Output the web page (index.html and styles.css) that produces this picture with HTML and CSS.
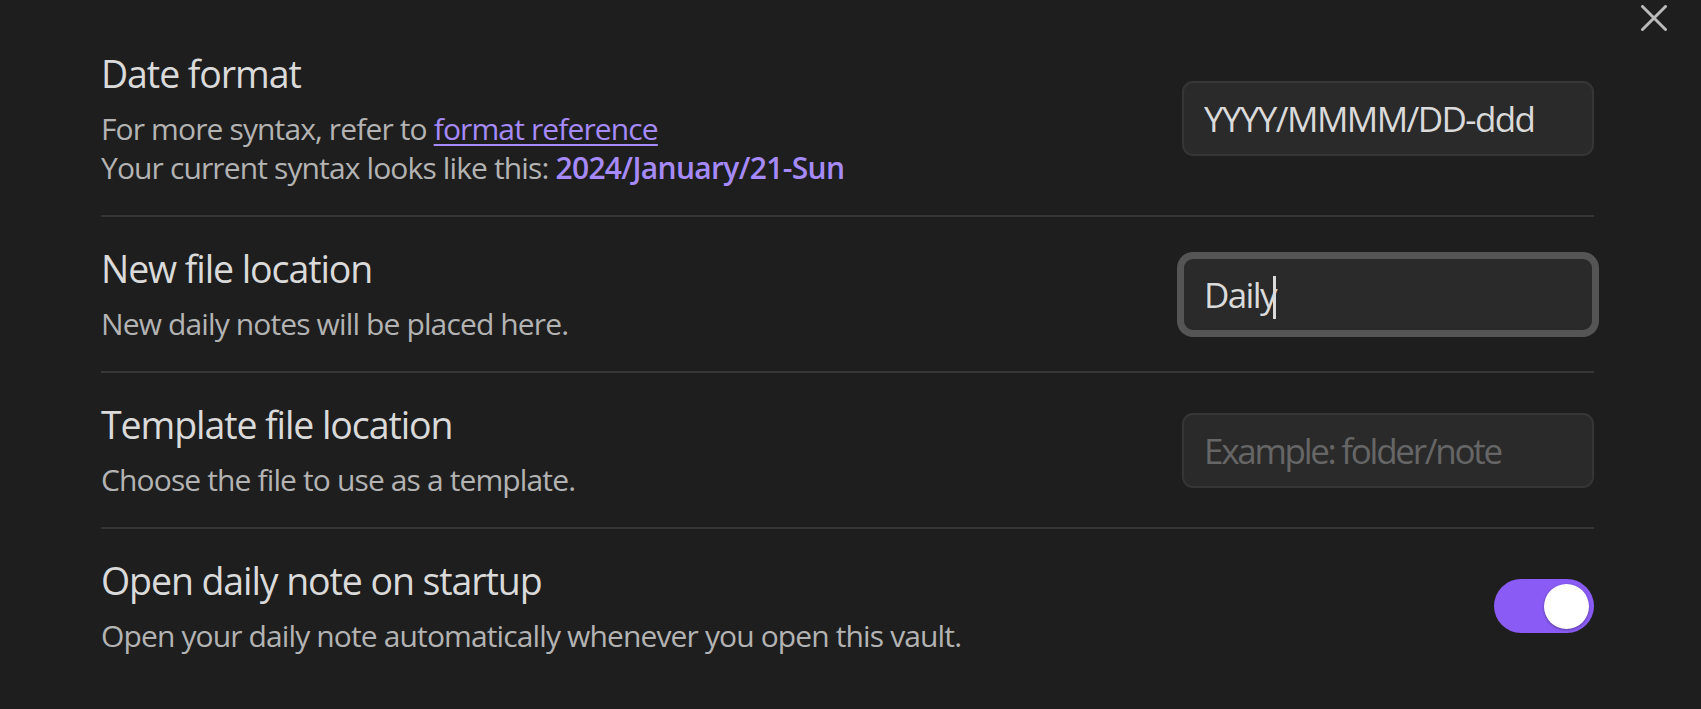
FILE: index.html
```html
<!DOCTYPE html>
<html lang="en">
<head>
<meta charset="utf-8">
<title>Daily notes settings</title>
<link rel="stylesheet" href="styles.css">
</head>
<body>
<div class="modal">
  <button class="close" aria-label="Close">
    <svg width="26" height="26" viewBox="0 0 26 26"><path d="M1.5 1.5L24.5 24.5M24.5 1.5L1.5 24.5" stroke="#bababa" stroke-width="3" stroke-linecap="round" fill="none"/></svg>
  </button>
  <div class="settings">
    <div class="item first">
      <div class="info">
        <div class="name">Date format</div>
        <div class="desc">For more syntax, refer to <a class="link" href="#">format reference</a><br>Your current syntax looks like this: <b class="pop">2024/January/21-Sun</b></div>
      </div>
      <div class="control"><input class="field" type="text" value="YYYY/MMMM/DD-ddd"></div>
    </div>
    <div class="item">
      <div class="info">
        <div class="name">New file location</div>
        <div class="desc">New daily notes will be placed here.</div>
      </div>
      <div class="control"><div class="field focused"><span class="val">Daily</span><span class="caret"></span></div></div>
    </div>
    <div class="item">
      <div class="info">
        <div class="name">Template file location</div>
        <div class="desc">Choose the file to use as a template.</div>
      </div>
      <div class="control"><input class="field" type="text" placeholder="Example: folder/note"></div>
    </div>
    <div class="item">
      <div class="info">
        <div class="name">Open daily note on startup</div>
        <div class="desc">Open your daily note automatically whenever you open this vault.</div>
      </div>
      <div class="control"><div class="toggle on"><span class="knob"></span></div></div>
    </div>
  </div>
</div>
</body>
</html>
```
FILE: styles.css
```css
html, body {
  margin: 0;
  padding: 0;
  background: #1e1e1e;
  height: 100%;
}
body {
  font-family: "Open Sans", "Noto Sans", sans-serif;
  color: #dadada;
}
.modal {
  position: relative;
  min-height: 709px;
  box-sizing: border-box;
  padding: 22px 107px 0 101px;
}
.close {
  position: absolute;
  top: 5px;
  left: 1641px;
  width: 26px;
  height: 26px;
  padding: 0;
  border: 0;
  background: none;
  display: block;
}
.close svg { display: block; }
.settings {
  display: flex;
  flex-direction: column;
}
.item {
  display: flex;
  align-items: center;
  gap: 24px;
  padding: 28px 0;
  border-top: 2px solid #363636;
}
.item.first {
  border-top: 0;
}
.info {
  flex: 1;
  min-width: 0;
}
.name {
  font-size: 37.5px;
  line-height: 48px;
  letter-spacing: -0.029em;
  color: #dadada;
}
.desc {
  font-size: 30px;
  line-height: 39px;
  padding-top: 11px;
  letter-spacing: -0.029em;
  color: #b3b3b3;
}
.link {
  color: #a68af9;
  text-decoration: underline;
  text-decoration-thickness: 2px;
  text-underline-offset: 4px;
}
.pop {
  color: #a68af9;
  font-weight: 600;
  letter-spacing: -0.022em;
}
.control {
  flex: none;
  display: flex;
  justify-content: flex-end;
}
.field {
  box-sizing: border-box;
  width: 412px;
  height: 75px;
  padding: 0 20px;
  border: 2px solid #363636;
  border-radius: 11px;
  background: #2a2a2a;
  color: #dadada;
  font-family: "Open Sans", "Noto Sans", sans-serif;
  font-size: 35px;
  letter-spacing: -0.046em;
  outline: none;
}
.field::placeholder {
  color: #666666;
  letter-spacing: -0.065em;
}
.field.focused {
  display: flex;
  align-items: center;
  border-color: #555555;
  box-shadow: 0 0 0 5px #555555;
}
.caret {
  display: inline-block;
  width: 3px;
  height: 43px;
  margin-left: -3px;
  margin-top: 6px;
  background: #dadada;
}
.toggle {
  box-sizing: border-box;
  width: 100px;
  height: 54px;
  border-radius: 27px;
  background: #8a5cf5;
  display: flex;
  align-items: center;
  justify-content: flex-end;
  padding: 0 5px;
}
.knob {
  width: 45px;
  height: 45px;
  border-radius: 50%;
  background: #ffffff;
  box-shadow: 0 1px 3px rgba(0, 0, 0, 0.35);
}
```
